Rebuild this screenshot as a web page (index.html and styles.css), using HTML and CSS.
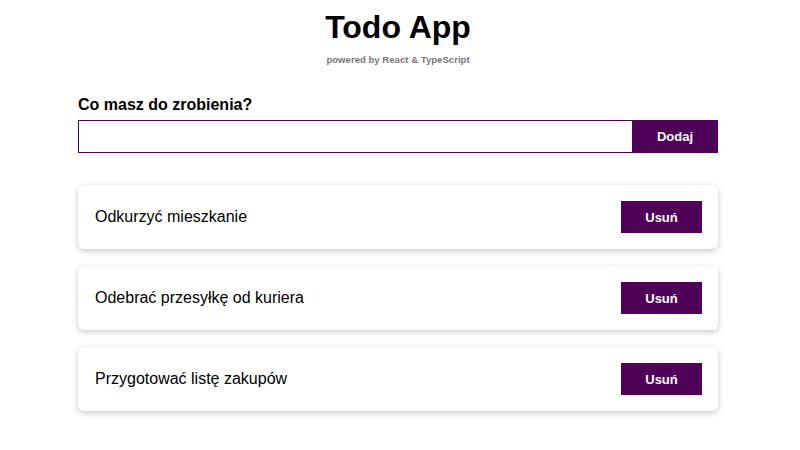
FILE: index.html
```html
<!DOCTYPE html>
<html lang="pl">
<head>
<meta charset="utf-8">
<title>Todo App</title>
<link rel="stylesheet" href="styles.css">
</head>
<body>
<div class="app">
  <header class="header">
    <h1 class="title">Todo App</h1>
    <p class="subtitle">powered by React &amp; TypeScript</p>
  </header>
  <form class="form">
    <label class="label" for="todo">Co masz do zrobienia?</label>
    <div class="form-row">
      <input class="input" id="todo" type="text">
      <button class="btn btn-add" type="button">Dodaj</button>
    </div>
  </form>
  <ul class="list">
    <li class="card"><span class="card-text">Odkurzyć mieszkanie</span><button class="btn btn-remove" type="button">Usuń</button></li>
    <li class="card"><span class="card-text">Odebrać przesyłkę od kuriera</span><button class="btn btn-remove" type="button">Usuń</button></li>
    <li class="card"><span class="card-text">Przygotować listę zakupów</span><button class="btn btn-remove" type="button">Usuń</button></li>
  </ul>
</div>
</body>
</html>
```
FILE: styles.css
```css
* { box-sizing: border-box; }
html, body { margin: 0; padding: 0; background: #fff; }
body { font-family: "Liberation Sans", Arial, sans-serif; color: #000; padding-right: 4px; }
.app { width: 640px; margin: 0 auto; padding: 9px 0 30px; }
.header { text-align: center; }
.title { margin: 0; font-size: 32px; line-height: 37px; font-weight: bold; }
.subtitle { margin: 8px 0 0; font-size: 9.6px; font-weight: bold; color: #777; line-height: 12px; }
.form { margin-top: 30px; }
.label { display: block; font-size: 16px; font-weight: bold; line-height: 18px; margin-bottom: 6px; }
.form-row { display: flex; height: 33px; }
.input { flex: 1; border: 1px solid #4f0057; border-right: none; outline: none; font: inherit; font-size: 16px; padding: 0 8px; }
.btn { border: none; background: #4f0057; color: #fff; font-family: "Liberation Sans", Arial, sans-serif; font-weight: bold; font-size: 13px; cursor: pointer; }
.btn-add { width: 86px; }
.list { list-style: none; margin: 32px 0 0; padding: 0; display: flex; flex-direction: column; gap: 17px; }
.card { display: flex; align-items: center; justify-content: space-between; height: 64px; padding: 0 16px 0 17px; border-radius: 6px; box-shadow: 0 2px 6px rgba(0,0,0,0.22); background: #fff; }
.card-text { font-size: 16px; }
.btn-remove { width: 81px; height: 32px; }
```
